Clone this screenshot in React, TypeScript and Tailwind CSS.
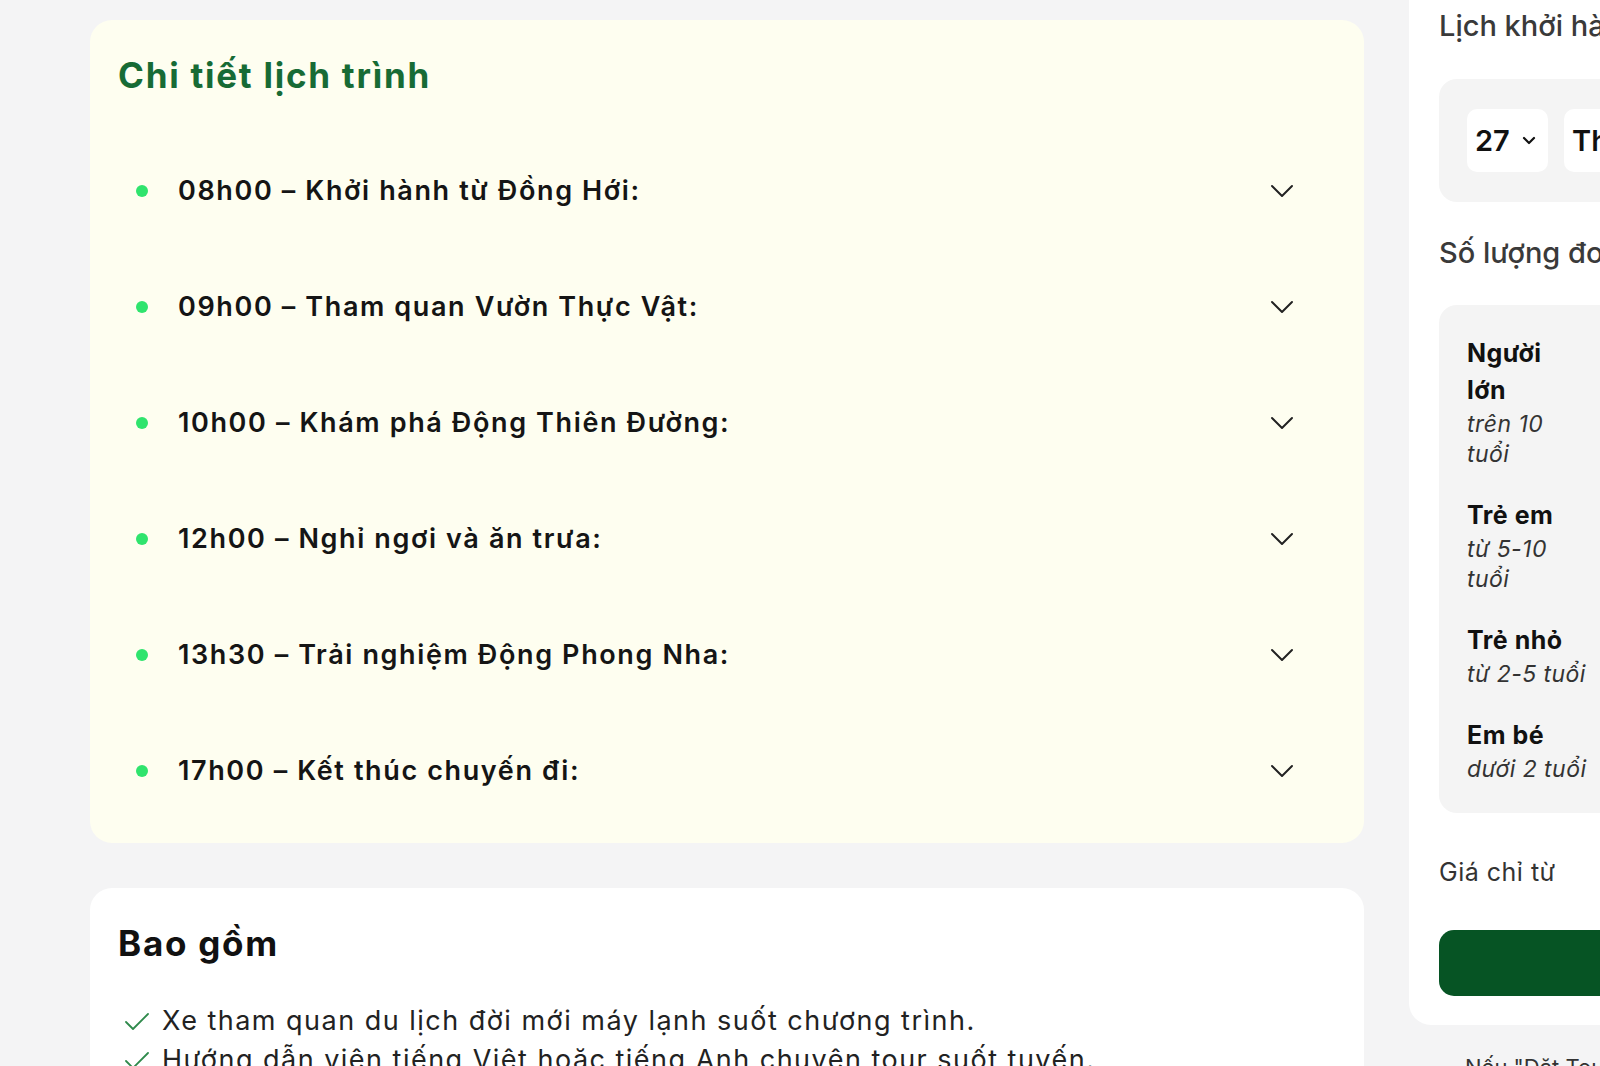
import React from 'react';

const schedule = [
  '08h00 – Khởi hành từ Đồng Hới:',
  '09h00 – Tham quan Vườn Thực Vật:',
  '10h00 – Khám phá Động Thiên Đường:',
  '12h00 – Nghỉ ngơi và ăn trưa:',
  '13h30 – Trải nghiệm Động Phong Nha:',
  '17h00 – Kết thúc chuyến đi:',
];

const included = [
  'Xe tham quan du lịch đời mới máy lạnh suốt chương trình.',
  'Hướng dẫn viên tiếng Việt hoặc tiếng Anh chuyên tour suốt tuyến.',
];

const guests = [
  { name: 'Người lớn', note: 'trên 10 tuổi' },
  { name: 'Trẻ em', note: 'từ 5-10 tuổi' },
  { name: 'Trẻ nhỏ', note: 'từ 2-5 tuổi' },
  { name: 'Em bé', note: 'dưới 2 tuổi' },
];

const Chevron = () => (
  <svg width="24" height="14" viewBox="0 0 24 14" fill="none">
    <polyline points="2,2 12,12 22,2" stroke="#222" strokeWidth="2" strokeLinecap="round" strokeLinejoin="round" />
  </svg>
);

const Check = () => (
  <svg width="26" height="20" viewBox="0 0 26 20" fill="none">
    <polyline points="2,10 9,17 24,2" stroke="#2f8a4c" strokeWidth="1.8" strokeLinecap="round" strokeLinejoin="round" />
  </svg>
);

const App = () => {
  return (
    <div
      className="w-[1600px] h-[1066px] overflow-hidden bg-[#f4f4f5] flex"
      style={{ fontFamily: 'Inter, "Noto Sans", sans-serif' }}
    >
      {/* left column */}
      <div className="ml-[90px] w-[1274px] shrink-0 pt-[20px] flex flex-col gap-[45px]">
        <div className="bg-[#fefef0] rounded-[22px] pl-[28px] pr-[70px] pt-[33px] pb-[14px]">
          <h2 className="text-[35px] leading-[44px] font-bold text-[#176b35] tracking-[0.05em]">Chi tiết lịch trình</h2>
          <div className="mt-[36px] flex flex-col">
            {schedule.map((s) => (
              <div key={s} className="h-[116px] flex items-center">
                <span className="w-[12px] h-[12px] rounded-full bg-[#2fe46d] ml-[18px] mr-[30px] shrink-0" />
                <span className="flex-1 text-[27px] font-semibold text-[#151515] tracking-[0.06em]">{s}</span>
                <Chevron />
              </div>
            ))}
          </div>
        </div>

        <div className="bg-white rounded-[22px] pl-[28px] pt-[33px] pb-[20px]">
          <h2 className="text-[35px] leading-[44px] font-bold text-[#111] tracking-[0.05em]">Bao gồm</h2>
          <ul className="mt-[37px] flex flex-col">
            {included.map((t) => (
              <li key={t} className="flex items-center h-[39px]">
                <span className="ml-[6px] mr-[12px] shrink-0"><Check /></span>
                <span className="text-[27px] text-[#222] tracking-[0.055em] whitespace-nowrap">{t}</span>
              </li>
            ))}
          </ul>
        </div>
      </div>

      {/* right column */}
      <div className="ml-[45px] w-[420px] shrink-0 flex flex-col">
        <div className="bg-white rounded-b-[22px] pl-[30px] pb-[29px]">
          <h3 className="pt-[8px] text-[29px] leading-[36px] font-medium text-[#3a3a3a] whitespace-nowrap">Lịch khởi hành</h3>
          <div className="mt-[35px] bg-[#f4f4f4] rounded-l-[18px] h-[123px] flex items-center pl-[28px] gap-[16px]">
            <div className="bg-white rounded-[10px] w-[81px] h-[63px] flex items-center pl-[8px] gap-[12px]">
              <span className="text-[29px] font-semibold text-[#111]">27</span>
              <svg width="14" height="9" viewBox="0 0 14 9" fill="none">
                <polyline points="2,2 7,7 12,2" stroke="#111" strokeWidth="2.2" strokeLinecap="round" strokeLinejoin="round" />
              </svg>
            </div>
            <div className="bg-white rounded-l-[10px] w-[200px] h-[63px] flex items-center pl-[8px]">
              <span className="text-[29px] font-semibold text-[#111] whitespace-nowrap">Tháng 10</span>
            </div>
          </div>

          <h3 className="mt-[33px] text-[29px] leading-[36px] font-medium text-[#3a3a3a] whitespace-nowrap">Số lượng đoàn</h3>
          <div className="mt-[34px] bg-[#f4f4f4] rounded-l-[18px] pl-[28px] pt-[30px] pb-[29px] flex flex-col gap-[28px]">
            {guests.map((g) => (
              <div key={g.name} className="w-[122px]">
                <div className="text-[25px] leading-[37px] font-bold text-[#111] tracking-[0.02em] w-[104px]">{g.name}</div>
                <div className="text-[23px] leading-[30px] italic text-[#333] tracking-[0.02em]">{g.note}</div>
              </div>
            ))}
          </div>

          <div className="mt-[43px] text-[25px] leading-[32px] text-[#333] tracking-[0.02em]">Giá chỉ từ</div>
          <div className="mt-[42px] h-[66px] bg-[#065424] rounded-l-[15px]" />
        </div>
        <div className="mt-[26px] pl-[56px] text-[22px] text-[#333] whitespace-nowrap">Nếu "Đặt Tour" không được</div>
      </div>
    </div>
  );
};

export default App;
